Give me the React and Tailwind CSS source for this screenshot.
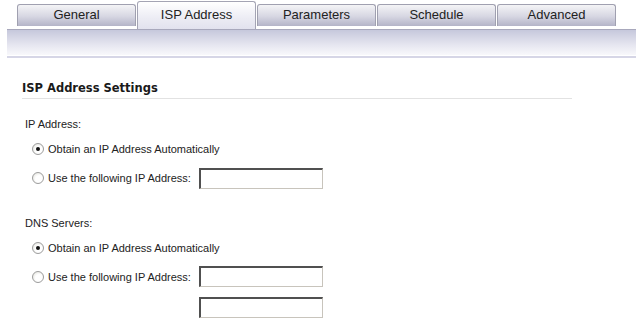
import React from "react";

const tabs = ["General", "ISP Address", "Parameters", "Schedule", "Advanced"];

function Radio({ checked }) {
  return (
    <span className="inline-flex items-center justify-center w-[12px] h-[12px] rounded-full border border-[#9c9c9c] bg-[radial-gradient(circle_at_60%_60%,#ffffff_40%,#dcdcd4_100%)]">
      {checked && <span className="block w-[4px] h-[4px] rounded-full bg-[#111]" />}
    </span>
  );
}

function Input() {
  return (
    <div className="w-[124px] h-[21px] bg-white border-t-2 border-l-2 border-b border-r border-t-[#505050] border-l-[#505050] border-b-[#c8c4bc] border-r-[#c8c4bc]" />
  );
}

function RadioRow({ checked, label, input }) {
  return (
    <div className="flex items-center h-[21px]">
      <div className="w-[32px]" />
      <Radio checked={checked} />
      <span className="ml-[4px] text-[11px] text-[#222]">{label}</span>
      {input && <div className="ml-[8px]"><Input /></div>}
    </div>
  );
}

export default function App() {
  return (
    <div className="w-[636px] h-[325px] bg-white overflow-hidden" style={{ fontFamily: "'Liberation Sans', Arial, sans-serif" }}>
      <div className="flex items-start h-[29px] pl-[17px] gap-[1px]">
        {tabs.map((t) =>
          t === "ISP Address" ? (
            <div key={t} className="mt-[1px] w-[119px] h-[28px] flex items-start justify-center pt-[3px] rounded-t-[3px] border border-b-0 border-[#a4a4b4] bg-[linear-gradient(#ffffff,#ececf4_60%,#e2e2ee)] text-[13px] text-[#222] relative z-10">
              {t}
            </div>
          ) : (
            <div key={t} className="mt-[4px] w-[119px] h-[22px] flex items-start justify-center pt-[0px] rounded-t-[3px] border border-b-0 border-[#a0a0b0] bg-[linear-gradient(#f4f4f6,#d6d6e2_55%,#b4b4c8)] text-[13px] text-[#222]">
              {t}
            </div>
          )
        )}
      </div>
      <div className="ml-[7px] h-[26px] border-t border-[#a8a8bc] bg-[linear-gradient(#c6c8dc,#e6e6f0_60%,#f8f8fb)]" />
      <div className="ml-[7px] mt-[1px] h-[2px] bg-[#d6d6e6]" />

      <div className="pl-[22px] pt-[22px]">
        <div className="w-[550px] border-b border-[#e2e2e2] pb-[1px] text-[11.5px] font-bold text-[#1a1a1a]" style={{ fontFamily: "'DejaVu Sans', Verdana, sans-serif" }}>
          ISP Address Settings
        </div>
      </div>

      <div className="pl-[25px] pt-[17px] text-[11px] text-[#222]">IP Address:</div>
      <div className="mt-[6px] flex flex-col gap-[8px]">
        <RadioRow checked label="Obtain an IP Address Automatically" />
        <RadioRow label="Use the following IP Address:" input />
      </div>

      <div className="pl-[25px] pt-[26px] text-[11px] text-[#222]">DNS Servers:</div>
      <div className="mt-[6px] flex flex-col gap-[8px]">
        <RadioRow checked label="Obtain an IP Address Automatically" />
        <RadioRow label="Use the following IP Address:" input />
        <div className="flex h-[21px] mt-[2px]">
          <div className="ml-[199px]"><Input /></div>
        </div>
      </div>
    </div>
  );
}
